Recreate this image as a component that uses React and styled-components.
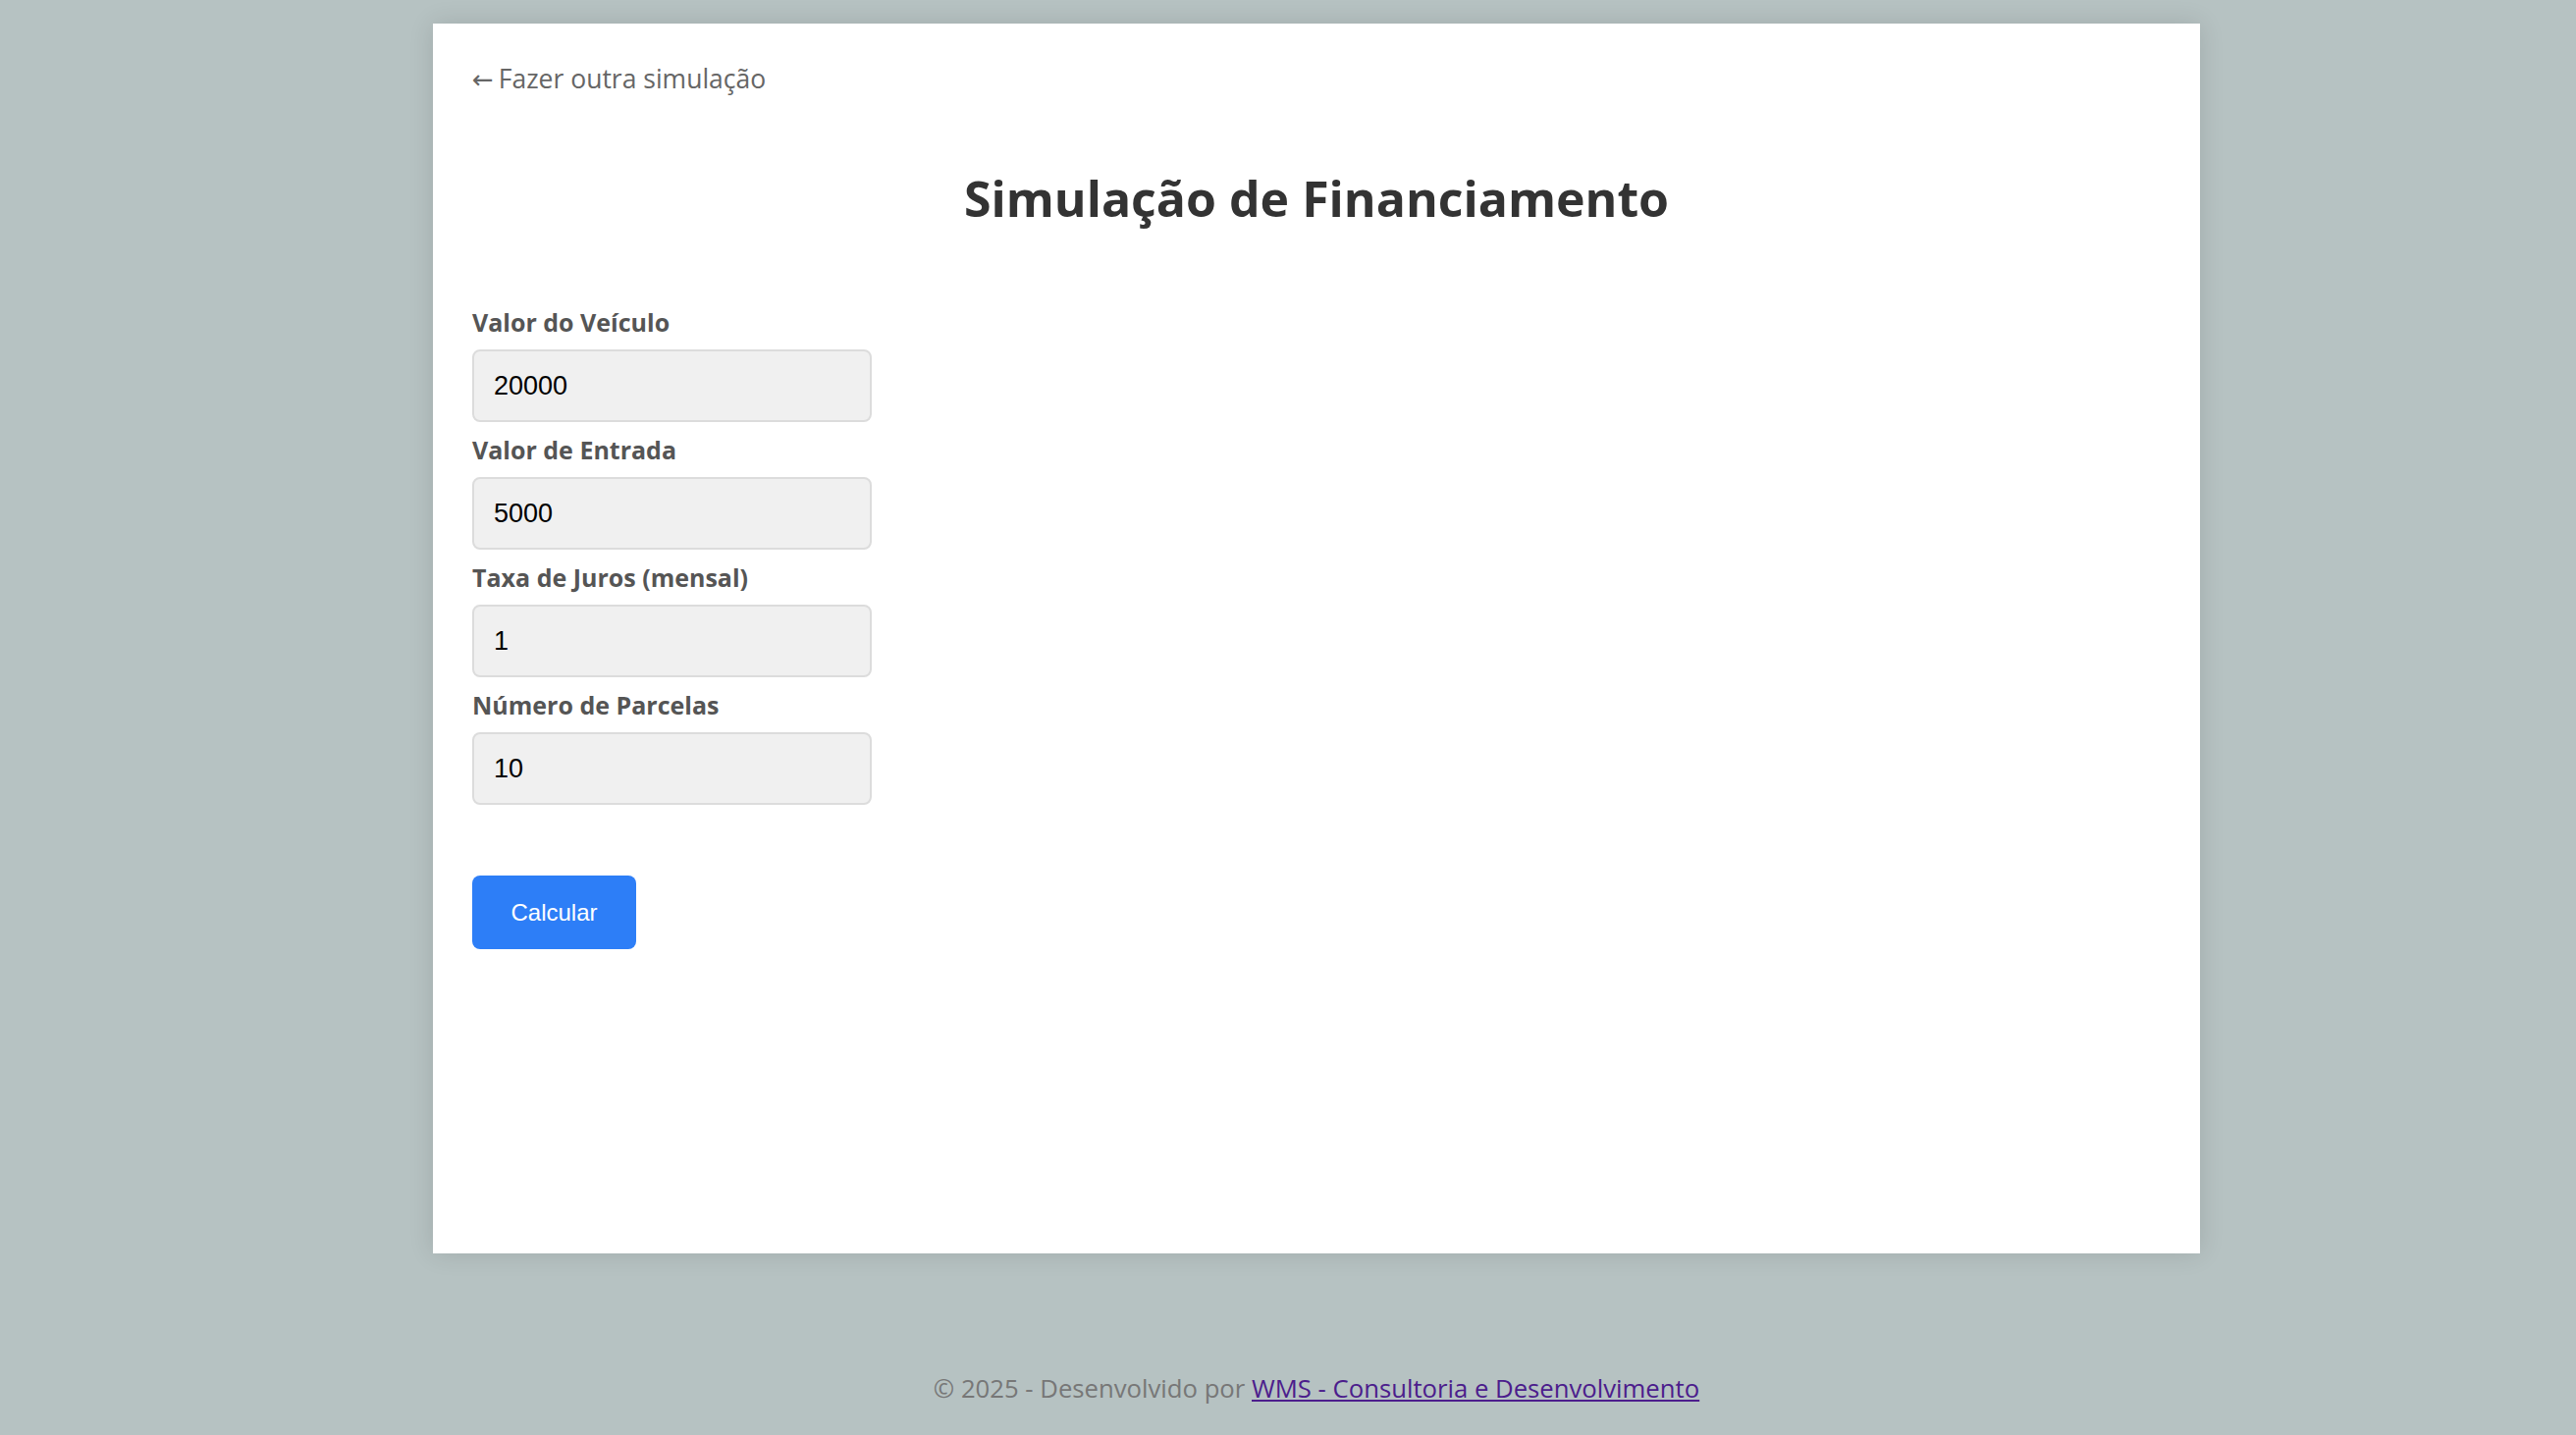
import React from 'react';
import styled, { createGlobalStyle } from 'styled-components';

const GlobalStyle = createGlobalStyle`
  html, body {
    margin: 0;
    padding: 0;
    background: #b6c2c2;
    font-family: "Open Sans", "Liberation Sans", sans-serif;
  }
`;

const Page = styled.div`
  min-height: 1462px;
  box-sizing: border-box;
  padding: 24px 0 0 58px;
  display: flex;
  flex-direction: column;
  align-items: center;
`;

const Card = styled.div`
  width: 1800px;
  min-height: 1253px;
  box-sizing: border-box;
  padding: 37px 40px 40px;
  background: #fff;
  box-shadow: 0 0 24px rgba(0, 0, 0, 0.12);
  display: flex;
  flex-direction: column;
`;

const BackLink = styled.a`
  align-self: flex-start;
  font-size: 26.5px;
  line-height: 38px;
  color: #666;
  text-decoration: none;
  cursor: pointer;
`;

const Arrow = styled.span`
  font-family: "DejaVu Sans", sans-serif;
  font-size: 26px;
  margin-right: 5px;
`;

const Title = styled.h1`
  margin: 70px 0 76px;
  text-align: center;
  font-size: 50px;
  line-height: 64px;
  font-weight: 700;
  color: #333;
`;

const Form = styled.form`
  display: flex;
  flex-direction: column;
`;

const Field = styled.div`
  display: flex;
  flex-direction: column;
  gap: 10px;
  margin-bottom: 10px;
`;

const Label = styled.label`
  font-size: 25px;
  line-height: 36px;
  font-weight: 700;
  color: #555;
`;

const Input = styled.input`
  width: 407px;
  height: 74px;
  box-sizing: border-box;
  padding: 0 20px;
  border: 2px solid #dcdcdc;
  border-radius: 8px;
  background: #f0f0f0;
  font-family: "Liberation Sans", Arial, sans-serif;
  font-size: 27px;
  color: #000;
  outline: none;
`;

const Button = styled.button`
  align-self: flex-start;
  margin-top: 62px;
  width: 167px;
  height: 75px;
  border: none;
  border-radius: 8px;
  background: #2d7ef7;
  color: #fff;
  font-family: "Liberation Sans", Arial, sans-serif;
  font-size: 24px;
  cursor: pointer;
`;

const Footer = styled.footer`
  margin-top: 119px;
  font-size: 25.7px;
  line-height: 38px;
  color: #777;
`;

const FooterLink = styled.a`
  color: #4c1d8c;
  text-decoration: underline;
`;

const fields = [
  { id: 'valor', label: 'Valor do Veículo', value: '20000' },
  { id: 'entrada', label: 'Valor de Entrada', value: '5000' },
  { id: 'juros', label: 'Taxa de Juros (mensal)', value: '1' },
  { id: 'parcelas', label: 'Número de Parcelas', value: '10' },
];

export default function App() {
  return (
    <>
      <GlobalStyle />
      <Page>
        <Card>
          <BackLink><Arrow>←</Arrow>Fazer outra simulação</BackLink>
          <Title>Simulação de Financiamento</Title>
          <Form onSubmit={e => e.preventDefault()}>
            {fields.map(f => (
              <Field key={f.id}>
                <Label htmlFor={f.id}>{f.label}</Label>
                <Input id={f.id} type="text" defaultValue={f.value} />
              </Field>
            ))}
            <Button type="submit">Calcular</Button>
          </Form>
        </Card>
        <Footer>
          © 2025 - Desenvolvido por <FooterLink href="#">WMS - Consultoria e Desenvolvimento</FooterLink>
        </Footer>
      </Page>
    </>
  );
}
